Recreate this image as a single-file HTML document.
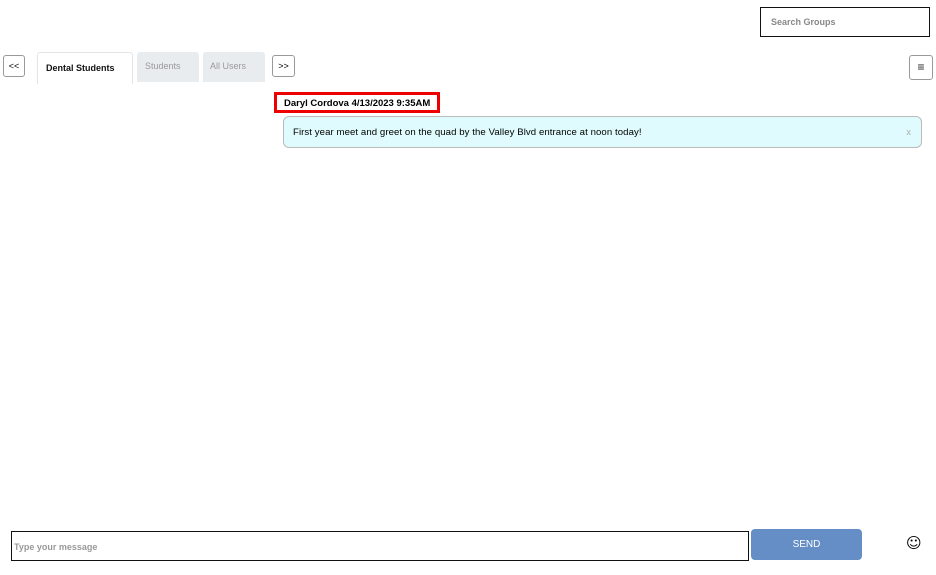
<!DOCTYPE html>
<html><head><style>
body{margin:0;width:936px;height:575px;background:#fff;font-family:"Liberation Sans",sans-serif;position:relative;overflow:hidden}
.a{position:absolute;box-sizing:border-box}
</style></head><body>
<div class="a" style="left:760px;top:7px;width:170px;height:30px;border:1.5px solid #111;font-size:9px;color:#888;padding:9px 0 0 10px;font-weight:bold">Search Groups</div>
<div class="a" style="left:3px;top:55px;width:22px;height:22px;border:1px solid #999;border-radius:3px;font-size:9px;text-align:center;line-height:20px">&lt;&lt;</div>
<div class="a" style="left:37px;top:52px;width:96px;height:32px;border:1px solid #e4e4e4;border-bottom:none;border-radius:3px 3px 0 0;font-size:9px;font-weight:bold;padding:10px 0 0 8px;color:#111">Dental Students</div>
<div class="a" style="left:137px;top:52px;width:62px;height:30px;background:#e9ecef;border-radius:3px 3px 0 0;font-size:9px;color:#999;padding:9px 0 0 8px">Students</div>
<div class="a" style="left:203px;top:52px;width:62px;height:30px;background:#e9ecef;border-radius:3px 3px 0 0;font-size:9px;color:#999;padding:9px 0 0 7px">All Users</div>
<div class="a" style="left:272px;top:55px;width:23px;height:22px;border:1px solid #999;border-radius:3px;font-size:9px;text-align:center;line-height:20px">&gt;&gt;</div>
<div class="a" style="left:909px;top:55px;width:24px;height:25px;border:1px solid #999;border-radius:3px;font-size:12px;text-align:center;line-height:23px;color:#222">≡</div>
<div class="a" style="left:274px;top:92px;width:166px;height:21px;border:3px solid #e00;font-size:9.5px;font-weight:bold;padding:3px 0 0 7px;white-space:nowrap">Daryl Cordova 4/13/2023 9:35AM</div>
<div class="a" style="left:283px;top:116px;width:639px;height:32px;background:#e0fbfd;border:1px solid #bbb;border-radius:6px;font-size:9.6px;letter-spacing:0.08px;padding:10px 0 0 9px;white-space:nowrap">First year meet and greet on the quad by the Valley Blvd entrance at noon today!<span style="position:absolute;right:10px;top:10px;color:#aaa;font-size:9px">x</span></div>
<div class="a" style="left:11px;top:531px;width:738px;height:30px;border:1px solid #111;font-size:9px;color:#999;padding:10px 0 0 2px;font-weight:bold">Type your message</div>
<div class="a" style="left:751px;top:529px;width:111px;height:31px;background:#658dc6;border-radius:4px;color:#fff;font-size:10px;text-align:center;line-height:31px">SEND</div>
<div class="a" style="left:906px;top:534px;font-size:15px;line-height:18px;font-family:'DejaVu Sans',sans-serif">☺</div>
</body></html>
